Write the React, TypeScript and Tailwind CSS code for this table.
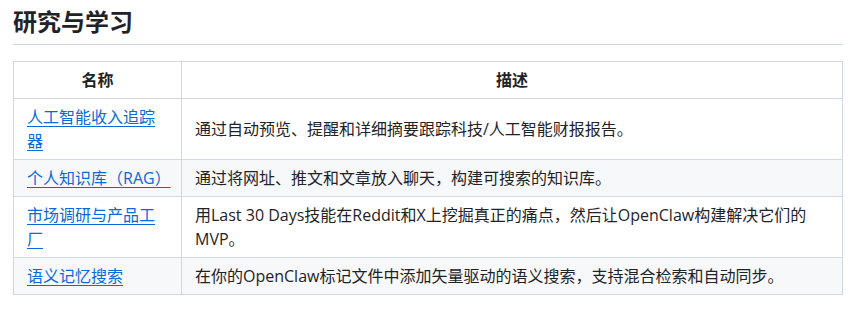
import React from 'react';

const rows = [
  {
    name: '人工智能收入追踪器',
    desc: '通过自动预览、提醒和详细摘要跟踪科技/人工智能财报报告。',
  },
  {
    name: '个人知识库（RAG）',
    desc: '通过将网址、推文和文章放入聊天，构建可搜索的知识库。',
  },
  {
    name: '市场调研与产品工厂',
    desc: '用Last 30 Days技能在Reddit和X上挖掘真正的痛点，然后让OpenClaw构建解决它们的MVP。',
  },
  {
    name: '语义记忆搜索',
    desc: '在你的OpenClaw标记文件中添加矢量驱动的语义搜索，支持混合检索和自动同步。',
  },
];

export default function App() {
  return (
    <div
      className="bg-white pl-[13px] pr-[10px] pt-[7px] text-[#1f2328]"
      style={{ fontFamily: '"Open Sans", "Noto Sans CJK SC", sans-serif' }}
    >
      <h2 className="border-b border-[#d1d9e0] pb-[7px] text-[24px] font-bold leading-[30px]">
        研究与学习
      </h2>
      <table className="mt-4 w-full table-fixed border-collapse text-[16px] leading-6">
        <thead>
          <tr className="bg-white">
            <th className="w-[168px] border border-[#d1d9e0] px-[13px] py-[6px] text-center font-bold">
              名称
            </th>
            <th className="border border-[#d1d9e0] px-[13px] py-[6px] text-center font-bold">
              描述
            </th>
          </tr>
        </thead>
        <tbody>
          {rows.map((r, i) => (
            <tr key={r.name} className={i % 2 === 1 ? 'bg-[#f6f8fa]' : 'bg-white'}>
              <td className="border border-[#d1d9e0] px-[13px] py-[6px]">
                <a href="#" className="text-[#0969da] underline underline-offset-[3px]">
                  {r.name}
                </a>
              </td>
              <td className="border border-[#d1d9e0] px-[13px] py-[6px]">{r.desc}</td>
            </tr>
          ))}
        </tbody>
      </table>
    </div>
  );
}
